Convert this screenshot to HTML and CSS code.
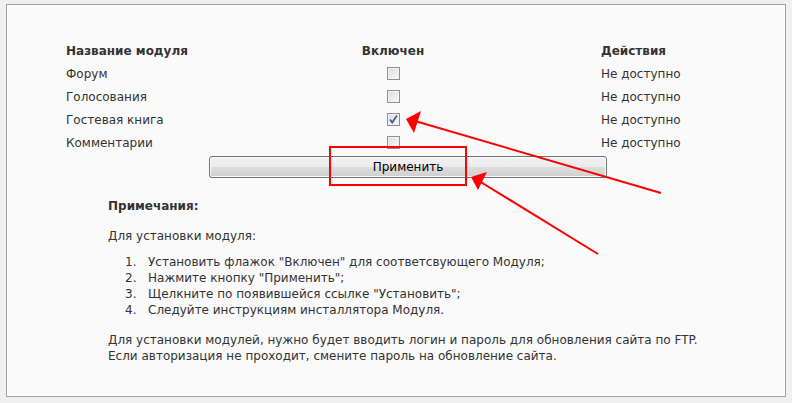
FILE: index.html
```html
<!DOCTYPE html>
<html lang="ru">
<head>
    <meta charset="UTF-8">
    <title>Модули</title>
    <link rel="stylesheet" href="styles.css">
</head>
<body>
    <div class="panel">
        <table class="modules">
            <thead>
                <tr>
                    <th class="col-name">Название модуля</th>
                    <th class="col-on">Включен</th>
                    <th class="col-act">Действия</th>
                </tr>
            </thead>
            <tbody>
                <tr>
                    <td>Форум</td>
                    <td class="col-on"><span class="check"></span></td>
                    <td>Не доступно</td>
                </tr>
                <tr>
                    <td>Голосования</td>
                    <td class="col-on"><span class="check"></span></td>
                    <td>Не доступно</td>
                </tr>
                <tr>
                    <td>Гостевая книга</td>
                    <td class="col-on">
                        <span class="check checked">
                            <svg width="11" height="11" viewBox="0 0 11 11"><path d="M2 5.5 L4.2 8.5 L9 1.5" fill="none" stroke="#3f5596" stroke-width="1.6"/></svg>
                        </span>
                    </td>
                    <td>Не доступно</td>
                </tr>
                <tr>
                    <td>Комментарии</td>
                    <td class="col-on"><span class="check"></span></td>
                    <td>Не доступно</td>
                </tr>
            </tbody>
        </table>

        <div class="actions">
            <button class="apply">Применить</button>
        </div>

        <div class="notes">
            <p class="notes-title">Примечания:</p>
            <p>Для установки модуля:</p>
            <ol>
                <li>Установить флажок "Включен" для соответсвующего Модуля;</li>
                <li>Нажмите кнопку "Применить";</li>
                <li>Щелкните по появившейся ссылке "Установить";</li>
                <li>Следуйте инструкциям инсталлятора Модуля.</li>
            </ol>
            <p>Для установки модулей, нужно будет вводить логин и пароль для обновления сайта по FTP.<br>
            Если авторизация не проходит, смените пароль на обновление сайта.</p>
        </div>
    </div>

    <!-- red marks drawn over the screenshot -->
    <svg class="marks" width="792" height="403" viewBox="0 0 792 403">
        <rect x="330" y="147" width="136" height="38" fill="none" stroke="#f00" stroke-width="2"/>
        <line x1="661" y1="193" x2="415" y2="121" stroke="#f00" stroke-width="2"/>
        <polygon points="406,119 421,111 414,133" fill="#f00"/>
        <line x1="598" y1="254" x2="479" y2="181" stroke="#f00" stroke-width="2"/>
        <polygon points="471,177 487,172 478,190" fill="#f00"/>
    </svg>
</body>
</html>
```

FILE: styles.css
```css
body {
    margin: 0;
    padding: 4px 6px 6px 6px;
    background-color: #f0f0f0;
    font-family: 'DejaVu Sans', Verdana, sans-serif;
    font-size: 12px;
    line-height: 16px;
    color: #333;
    position: relative;
}
.panel {
    height: 391px;
    border: 1px solid #a0a0a0;
    box-shadow: inset 0 0 0 1px #ffffff;
    background-color: #fafafa;
    box-sizing: content-box;
}
.modules {
    margin: 35px 0 0 59px;
    border-collapse: collapse;
    table-layout: fixed;
    width: 630px;
}
.modules th, .modules td {
    padding: 0;
    text-align: left;
    white-space: nowrap;
    height: 23px;
}
.modules th {
    height: 22px;
    font-weight: bold;
}
.col-name {
    width: 119px;
}
.col-on {
    width: 416px;
    text-align: center !important;
}
.check {
    display: inline-block;
    width: 11px;
    height: 11px;
    border: 1px solid #8f8f8f;
    background: linear-gradient(135deg, #dcdcdc, #f9f9f9);
    box-shadow: inset 0 0 0 1px #f4f4f4;
    vertical-align: middle;
    position: relative;
    top: -1px;
}
.check svg {
    display: block;
}
.actions {
    margin: 2px 0 0 202px;
}
.apply {
    display: block;
    width: 398px;
    height: 22px;
    padding: 0;
    border: 1px solid #707070;
    border-radius: 3px;
    background: linear-gradient(#f2f2f2 0%, #ebebeb 50%, #dddddd 50%, #cfcfcf 100%);
    box-shadow: inset 0 0 0 1px #fcfcfc;
    font-family: inherit;
    font-size: 12px;
    color: #000;
}
.notes {
    margin: 20px 0 0 101px;
}
.notes p {
    margin: 0 0 14px 0;
}
.notes .notes-title {
    font-weight: bold;
}
.notes ol {
    margin: -4px 0 14px 0;
    padding-left: 40px;
}
.notes li::marker {
    content: counter(list-item) ".\00a0\00a0\00a0";
}
.marks {
    position: absolute;
    top: 0;
    left: 0;
    pointer-events: none;
}
```
